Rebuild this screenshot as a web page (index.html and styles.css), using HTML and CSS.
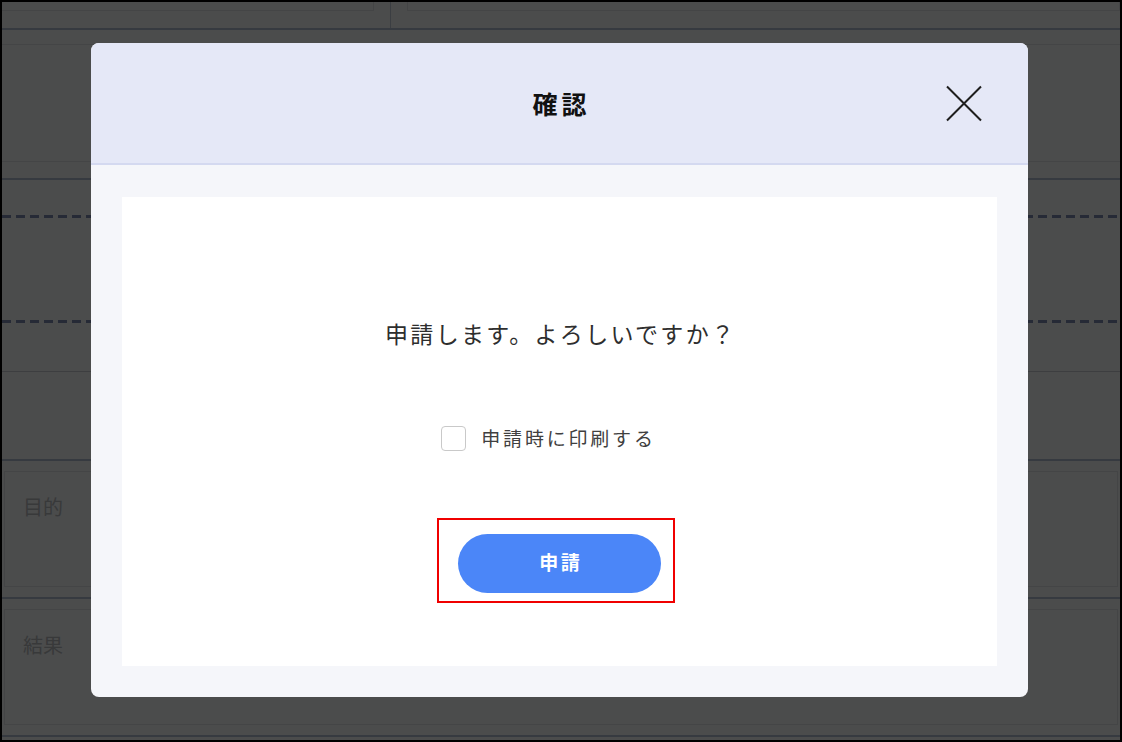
FILE: index.html
```html
<!DOCTYPE html>
<html lang="ja">
<head>
<meta charset="utf-8">
<title>確認</title>
<link rel="stylesheet" href="styles.css">
</head>
<body>
<div class="frame">
  <div class="bg-top">
    <div class="bg-cell bg-cell-left"><div class="bg-inner"></div></div>
    <div class="bg-cell bg-cell-right"><div class="bg-inner"></div></div>
  </div>
  <div class="bg-seg seg-a"></div>
  <div class="bg-seg seg-b"></div>
  <div class="bg-seg seg-c"></div>
  <div class="bg-seg seg-d"></div>
  <div class="dash"></div>
  <div class="bg-seg seg-e"></div>
  <div class="dash"></div>
  <div class="bg-seg seg-f"></div>
  <div class="bg-seg seg-g"></div>
  <div class="bg-field"><div class="bg-box"><span class="bg-label">目的</span></div></div>
  <div class="bg-field"><div class="bg-box"><span class="bg-label">結果</span></div></div>

  <div class="modal">
    <div class="modal-header">
      <div></div>
      <h1 class="modal-title">確認</h1>
      <button class="close-btn" type="button" aria-label="閉じる">
        <svg width="36" height="37" viewBox="0 0 36 37"><path d="M1 1.5 L35 35.5 M35 1.5 L1 35.5" stroke="#1e1e1e" stroke-width="2" fill="none"/></svg>
      </button>
    </div>
    <div class="modal-body">
      <div class="panel">
        <p class="message">申請します。よろしいですか？</p>
        <label class="check-row">
          <input type="checkbox" class="check">
          <span class="check-label">申請時に印刷する</span>
        </label>
        <div class="highlight">
          <button class="apply-btn" type="button">申請</button>
        </div>
      </div>
    </div>
  </div>
</div>
</body>
</html>
```

FILE: styles.css
```css
* { box-sizing: border-box; }
html, body { margin: 0; padding: 0; }
body {
  width: 1122px;
  height: 742px;
  overflow: hidden;
  font-family: "Noto Sans CJK JP", "Noto Sans", sans-serif;
  color: #333;
}
.frame {
  position: relative;
  width: 1122px;
  height: 742px;
  border: 2px solid #000;
  background: #4b4c4c;
  display: flex;
  flex-direction: column;
  overflow: hidden;
}
.bg-top {
  height: 28px;
  flex: none;
  display: flex;
  border-bottom: 2px solid #363a40;
}
.bg-cell { height: 100%; }
.bg-cell-left { width: 389px; border-right: 1px solid #3b3e42; padding-right: 16px; }
.bg-cell-right { flex: 1; padding-left: 16px; }
.bg-inner {
  height: 9px;
  border: 1px solid #444546;
  border-top: none;
}
.bg-cell-left .bg-inner { border-left: none; }
.bg-seg { flex: none; }
.seg-a { height: 15px; border-bottom: 1px solid #444546; }
.seg-b { height: 117px; border-bottom: 1px solid #444546; }
.seg-c { height: 18px; border-bottom: 2px solid #363a40; }
.seg-d { height: 35px; }
.dash {
  flex: none;
  height: 3px;
  background: repeating-linear-gradient(90deg, #262a36 0 9px, transparent 9px 14px);
}
.seg-e { height: 102px; }
.seg-f { height: 49px; border-bottom: 1px solid #3d3e40; }
.seg-g { height: 89px; border-bottom: 2px solid #363a40; }
.bg-field {
  flex: none;
  height: 138px;
  padding: 10px 2px 10px 2px;
  border-bottom: 2px solid #363a40;
}
.bg-box {
  height: 116px;
  border: 1px solid #444546;
  padding: 22px 0 0 18px;
}
.bg-label {
  font-size: 20px;
  line-height: 26px;
  color: #38393a;
}

/* modal overlay */
.modal {
  position: absolute;
  left: 89px;
  top: 41px;
  width: 937px;
  height: 654px;
  border-radius: 8px;
  overflow: hidden;
  background: #f5f6fa;
  display: flex;
  flex-direction: column;
}
.modal-header {
  height: 122px;
  flex: none;
  background: #e5e8f7;
  border-bottom: 2px solid #d4d9f0;
  display: grid;
  grid-template-columns: 1fr auto 1fr;
  align-items: center;
}
.modal-title {
  margin: 0;
  font-size: 25px;
  font-weight: 700;
  letter-spacing: 4px;
  padding-left: 4px;
  color: #111;
  line-height: 32px;
}
.close-btn {
  justify-self: end;
  margin-right: 46px;
  margin-top: 1px;
  width: 36px;
  height: 37px;
  padding: 0;
  border: none;
  background: none;
  display: block;
}
.close-btn svg { display: block; }
.modal-body {
  flex: 1;
  padding: 32px 31px 31px 31px;
}
.panel {
  height: 469px;
  background: #fff;
  display: flex;
  flex-direction: column;
  align-items: center;
  padding-top: 120px;
}
.message {
  margin: 0;
  font-size: 23px;
  line-height: 32px;
  letter-spacing: 2.3px;
  padding-left: 2.3px;
  color: #2e2e2e;
}
.check-row {
  margin-top: 76px;
  margin-right: 22px;
  height: 26px;
  display: flex;
  align-items: center;
  gap: 15px;
}
.check {
  appearance: none;
  -webkit-appearance: none;
  margin: 0;
  width: 25px;
  height: 25px;
  border: 1px solid #c9c9c9;
  border-radius: 4px;
  background: #fff;
}
.check-label {
  font-size: 19px;
  line-height: 26px;
  letter-spacing: 2.8px;
  color: #404040;
}
.highlight {
  margin-top: 67px;
  margin-right: 7px;
  border: 2px solid #f00000;
  padding: 14px 12px 8px 19px;
}
.apply-btn {
  display: block;
  width: 203px;
  height: 59px;
  border: none;
  border-radius: 30px;
  background: #4b86f8;
  color: #fff;
  font-family: "Noto Sans CJK JP", "Noto Sans", sans-serif;
  font-size: 19px;
  font-weight: 700;
  letter-spacing: 2.5px;
  padding: 0 0 4px 2.5px;
}
```
